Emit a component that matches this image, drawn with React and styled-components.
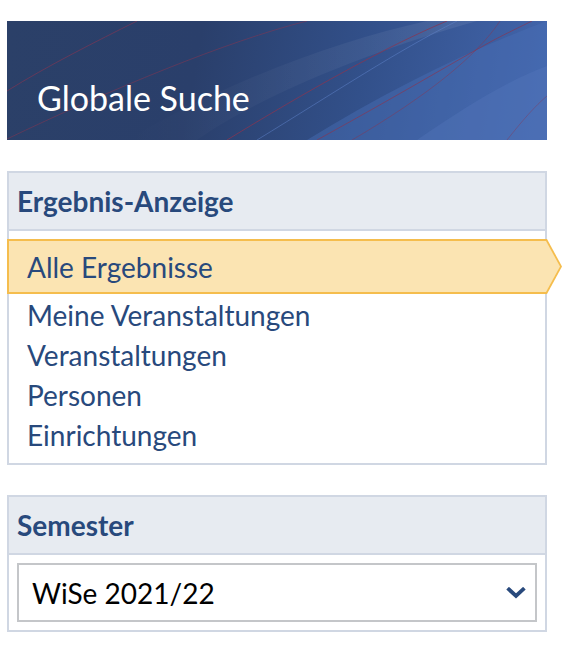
import React, { useState } from "react"
import styled, { createGlobalStyle } from "styled-components"

const GlobalStyle = createGlobalStyle`
  body {
    margin: 0;
    background: #fff;
    font-family: Lato, "Open Sans", "Liberation Sans", sans-serif;
  }
`

const resultLinks = [
  { id: "all", title: "Alle Ergebnisse" },
  { id: "mine", title: "Meine Veranstaltungen" },
  { id: "courses", title: "Veranstaltungen" },
  { id: "persons", title: "Personen" },
  { id: "institutes", title: "Einrichtungen" },
]

function BannerArt() {
  return (
    <svg viewBox="0 0 540 119" preserveAspectRatio="none" aria-hidden="true">
      <defs>
        <linearGradient id="sheen" x1="0" y1="0" x2="1" y2="0">
          <stop offset="0" stopColor="#ffffff" stopOpacity="0" />
          <stop offset="1" stopColor="#ffffff" stopOpacity="0.08" />
        </linearGradient>
      </defs>
      <path d="M300 119 C380 70 460 30 540 0 L540 119 Z" fill="#4a6fb5" opacity="0.45" />
      <path d="M410 119 C460 85 500 60 540 45 L540 119 Z" fill="#5579bd" opacity="0.35" />
      <path d="M120 119 C220 60 330 20 420 0 L470 0 C380 25 260 70 190 119 Z" fill="url(#sheen)" />
      <path d="M0 70 C40 45 90 20 130 0" stroke="#8a3450" strokeWidth="0.8" fill="none" opacity="0.75" />
      <path d="M0 118 C100 70 220 20 300 0" stroke="#8a3450" strokeWidth="0.8" fill="none" opacity="0.65" />
      <path d="M220 119 C300 70 380 25 440 0" stroke="#8a3450" strokeWidth="1" fill="none" opacity="0.75" />
      <path d="M310 119 C390 75 440 45 485 20 C500 12 515 5 525 0" stroke="#8a3450" strokeWidth="1" fill="none" opacity="0.65" />
      <path d="M345 119 C420 75 470 35 493 0" stroke="#8a3450" strokeWidth="0.8" fill="none" opacity="0.6" />
      <path d="M250 119 C330 70 390 30 450 0" stroke="#5f84cc" strokeWidth="1" fill="none" opacity="0.5" />
      <path d="M500 119 C515 100 528 85 540 75" stroke="#8a3450" strokeWidth="0.8" fill="none" opacity="0.5" />
    </svg>
  )
}

function Chevron() {
  return (
    <svg width="20" height="12" viewBox="0 0 20 12" aria-hidden="true">
      <polyline
        points="3,2.5 10,9 17,2.5"
        fill="none"
        stroke="#28497c"
        strokeWidth="3.8"
        strokeLinecap="square"
      />
    </svg>
  )
}

export default function App() {
  const [active, setActive] = useState("all")
  const [semester, setSemester] = useState("WiSe 2021/22")

  return (
    <>
      <GlobalStyle />
      <Sidebar>
        <Banner>
          <BannerArt />
          <BannerTitle>Globale Suche</BannerTitle>
        </Banner>

        <Widget>
          <WidgetHeader>Ergebnis-Anzeige</WidgetHeader>
          <LinkList>
            {resultLinks.map(({ id, title }) =>
              id === active ? (
                <ActiveItem key={id}>
                  <ActiveInner>{title}</ActiveInner>
                </ActiveItem>
              ) : (
                <LinkItem key={id} onClick={() => setActive(id)}>
                  {title}
                </LinkItem>
              )
            )}
          </LinkList>
        </Widget>

        <Widget>
          <WidgetHeader>Semester</WidgetHeader>
          <SelectBody>
            <SelectBox>
              <SelectValue>{semester}</SelectValue>
              <Chevron />
              <NativeSelect
                value={semester}
                onChange={(e) => setSemester(e.target.value)}
              >
                <option>WiSe 2021/22</option>
                <option>SoSe 2021</option>
                <option>WiSe 2020/21</option>
              </NativeSelect>
            </SelectBox>
          </SelectBody>
        </Widget>
      </Sidebar>
    </>
  )
}

const Sidebar = styled.div`
  width: 540px;
  padding: 21px 0 20px 7px;
  display: flex;
  flex-direction: column;
  gap: 30px;
`

const Banner = styled.div`
  position: relative;
  height: 119px;
  overflow: hidden;
  background: linear-gradient(100deg, #2b4068 0%, #2a3f6b 35%, #32508a 65%, #4366ad 100%);
  display: flex;
  align-items: flex-end;
  margin-bottom: 1px;
  svg {
    position: absolute;
    inset: 0;
    width: 100%;
    height: 100%;
  }
`

const BannerTitle = styled.h1`
  position: relative;
  margin: 0;
  padding: 0 0 22px 30px;
  color: #fff;
  font-size: 34px;
  font-weight: 400;
  line-height: 40px;
`

const Widget = styled.section`
  border: 2px solid #d0d7e3;
  background: #fff;
`

const WidgetHeader = styled.h2`
  margin: 0;
  height: 56px;
  padding: 0 8px;
  display: flex;
  align-items: center;
  background: #e7ebf1;
  border-bottom: 2px solid #d0d7e3;
  color: #28497c;
  font-size: 28px;
  font-weight: 700;
`

const LinkList = styled.div`
  display: flex;
  flex-direction: column;
  padding: 8px 0 8px;
`

const ActiveItem = styled.div`
  margin: 0 -17px 0 -2px;
  height: 55px;
  padding: 2px;
  box-sizing: border-box;
  background: #f5bd4d;
  clip-path: polygon(0 0, calc(100% - 15px) 0, 100% 50%, calc(100% - 15px) 100%, 0 100%);
`

const ActiveInner = styled.div`
  height: 100%;
  display: flex;
  align-items: center;
  padding-left: 18px;
  background: #fbe4b2;
  color: #28497c;
  font-size: 28px;
  clip-path: polygon(0 0, calc(100% - 14px) 0, 100% 50%, calc(100% - 14px) 100%, 0 100%);
`

const LinkItem = styled.a`
  display: block;
  height: 40px;
  line-height: 40px;
  padding-left: 18px;
  color: #28497c;
  font-size: 28px;
  cursor: pointer;
  &:first-of-type {
    margin-top: 1px;
  }
`

const SelectBody = styled.div`
  padding: 8px;
`

const SelectBox = styled.div`
  position: relative;
  height: 59px;
  box-sizing: border-box;
  border: 2px solid #c4c6c9;
  display: flex;
  align-items: center;
  justify-content: space-between;
  padding: 0 9px 0 13px;
`

const SelectValue = styled.span`
  color: #000;
  font-size: 28px;
`

const NativeSelect = styled.select`
  position: absolute;
  inset: 0;
  opacity: 0;
  cursor: pointer;
`
